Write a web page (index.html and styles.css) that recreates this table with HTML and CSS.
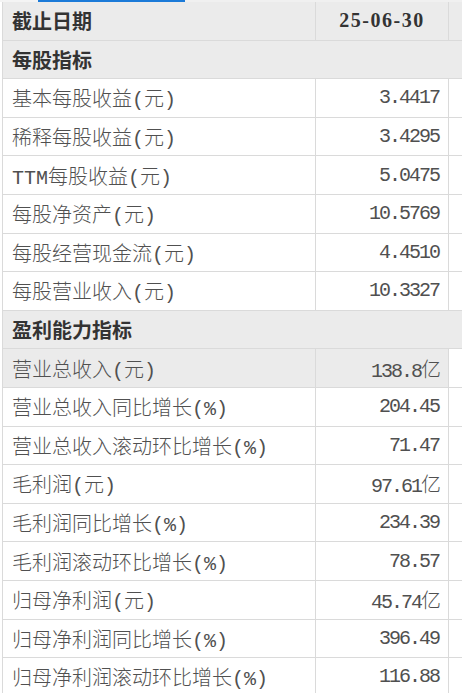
FILE: index.html
```html
<!DOCTYPE html>
<html lang="zh">
<head>
<meta charset="utf-8">
<link rel="stylesheet" href="styles.css">
</head>
<body>
<div class="tabs"><span class="tab-gap"></span><span class="tab-active"></span><span class="tab-rest"></span></div>
<div class="table">
  <div class="row head"><div class="c1">截止日期</div><div class="c2">25-06-30</div><div class="c3"></div></div>
  <div class="row section"><div class="sec">每股指标</div></div>
  <div class="row"><div class="c1">基本每股收益(元)</div><div class="c2">3.4417</div><div class="c3"></div></div>
  <div class="row"><div class="c1">稀释每股收益(元)</div><div class="c2">3.4295</div><div class="c3"></div></div>
  <div class="row"><div class="c1">TTM每股收益(元)</div><div class="c2">5.0475</div><div class="c3"></div></div>
  <div class="row"><div class="c1">每股净资产(元)</div><div class="c2">10.5769</div><div class="c3"></div></div>
  <div class="row"><div class="c1">每股经营现金流(元)</div><div class="c2">4.4510</div><div class="c3"></div></div>
  <div class="row"><div class="c1">每股营业收入(元)</div><div class="c2">10.3327</div><div class="c3"></div></div>
  <div class="row section"><div class="sec">盈利能力指标</div></div>
  <div class="row hover"><div class="c1">营业总收入(元)</div><div class="c2">138.8亿</div><div class="c3"></div></div>
  <div class="row"><div class="c1">营业总收入同比增长(%)</div><div class="c2">204.45</div><div class="c3"></div></div>
  <div class="row"><div class="c1">营业总收入滚动环比增长(%)</div><div class="c2">71.47</div><div class="c3"></div></div>
  <div class="row"><div class="c1">毛利润(元)</div><div class="c2">97.61亿</div><div class="c3"></div></div>
  <div class="row"><div class="c1">毛利润同比增长(%)</div><div class="c2">234.39</div><div class="c3"></div></div>
  <div class="row"><div class="c1">毛利润滚动环比增长(%)</div><div class="c2">78.57</div><div class="c3"></div></div>
  <div class="row"><div class="c1">归母净利润(元)</div><div class="c2">45.74亿</div><div class="c3"></div></div>
  <div class="row"><div class="c1">归母净利润同比增长(%)</div><div class="c2">396.49</div><div class="c3"></div></div>
  <div class="row"><div class="c1">归母净利润滚动环比增长(%)</div><div class="c2">116.88</div><div class="c3"></div></div>
</div>
</body>
</html>
```
FILE: styles.css
```css
html, body {
  margin: 0;
  padding: 0;
  background: #ffffff;
}
body {
  font-family: "Liberation Mono", "Noto Sans CJK SC", monospace;
  color: #4a4a4a;
  overflow: hidden;
}
.tabs {
  display: flex;
  height: 2px;
}
.tab-gap {
  width: 38px;
  background: #f4f4f4;
}
.tab-active {
  width: 147px;
  background: #1b7ad8;
}
.tab-rest {
  flex: 1;
  background: #f0f0f0;
}
.table {
  margin-left: 2px;
  border-left: 1px solid #dadada;
}
.row {
  display: grid;
  grid-template-columns: 313px 133px 1fr;
  height: 38.6px;
  box-sizing: border-box;
  border-bottom: 1px solid #dadada;
  background: #fff;
}
.row > div {
  display: flex;
  align-items: center;
}
.c1 {
  padding-left: 9px;
  font-size: 20px;
  font-weight: 300;
  color: #505050;
  border-right: 1px solid #dadada;
  white-space: nowrap;
}
.c2 {
  justify-content: flex-end;
  padding-right: 9px;
  font-size: 20px;
  font-weight: 300;
  letter-spacing: -2px;
  color: #505050;
  border-right: 1px solid #dadada;
}
.head {
  background: #ebebeb;
}
.head .c1 {
  font-weight: bold;
  color: #333;
  font-size: 20px;
}
.head .c2 {
  justify-content: center;
  padding-right: 0;
  font-family: "Liberation Serif", "Noto Sans CJK SC", serif;
  font-weight: bold;
  color: #333;
  font-size: 20px;
  letter-spacing: 1.5px;
}
.section {
  display: flex;
  background: #ebebeb;
}
.sec {
  padding-left: 9px;
  font-size: 20px;
  font-weight: bold;
  color: #333;
}
.hover {
  background: #ebebeb;
}
.hover .c3 {
  background: #fff;
}
```
